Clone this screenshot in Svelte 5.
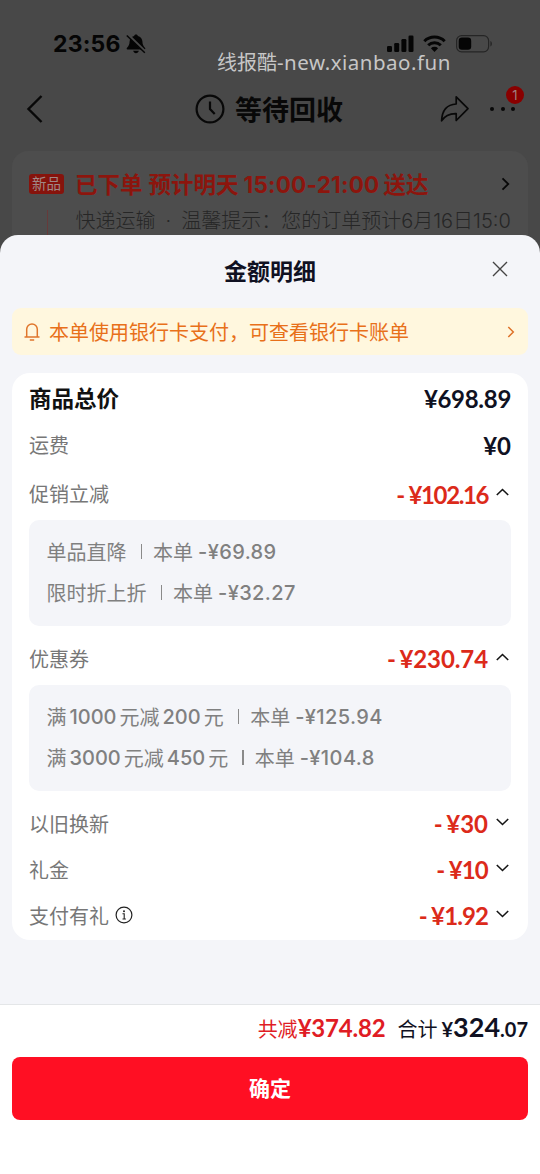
<script lang="ts">
	type Detail = { parts: string[], amount: string }
	type Row = { label: string, amount: string, spacing: number, kind?: string, arrow?: string, info?: boolean, details?: Detail[] }

	const rows: Row[] = [
		{ label: "商品总价", amount: "¥698.89", spacing: -0.3, kind: "total" },
		{ label: "运费", amount: "¥0", spacing: 0, kind: "freight" },
		{
			label: "促销立减", amount: "¥102.16", spacing: -1.4, kind: "promo", arrow: "up",
			details: [
				{ parts: ["单品直降"], amount: "-¥69.89" },
				{ parts: ["限时折上折"], amount: "-¥32.27" },
			],
		},
		{
			label: "优惠券", amount: "¥230.74", spacing: -0.1, kind: "coupon", arrow: "up",
			details: [
				{ parts: ["满", "1000", "元减", "200", "元"], amount: "-¥125.94" },
				{ parts: ["满", "3000", "元减", "450", "元"], amount: "-¥104.8" },
			],
		},
		{ label: "以旧换新", amount: "¥30", spacing: 0, kind: "trade", arrow: "down" },
		{ label: "礼金", amount: "¥10", spacing: -0.8, arrow: "down" },
		{ label: "支付有礼", amount: "¥1.92", spacing: -0.9, arrow: "down", info: true },
	]

	let open = $state(rows.map((row) => row.arrow === "up"))

	function toggle(i: number): void {
		if (rows[i].details) open[i] = !open[i]
	}
</script>

<main>
	<div class="behind">
		<div class="status">
			<span class="time">23:56</span>
			<svg class="mute" width="20" height="20" viewBox="0 0 20 20">
				<path d="M10 0.500c-1 0-1.800.7-1.900 1.500C5.400 2.700 3.700 4.900 3.600 7.500c-.1 3-.8 4.500-2.700 6.400-.5.6-.2 1.500.6 1.500h17c.8 0 1.100-.9.6-1.500-1.900-1.900-2.600-3.400-2.700-6.400C16.300 4.900 14.600 2.700 11.900 2 11.800 1.200 11 .5 10 .5zM7.200 16.700h5.600c-.3 1.600-1.400 2.500-2.800 2.500s-2.500-.9-2.800-2.500z" />
				<path d="M2.200 1l17.600 17.200" stroke="#484848" stroke-width="2.600" />
				<path d="M.8 1.500l18 17.300" stroke="#050505" stroke-width="1.500" />
			</svg>
			<span class="grow"></span>
			<svg width="27" height="18" viewBox="0 0 27 18">
				<rect x="0" y="11" width="5" height="6" rx="1.300" />
				<rect x="7.200" y="8" width="5" height="9" rx="1.300" />
				<rect x="14.400" y="4" width="5" height="13" rx="1.300" />
				<rect x="21.500" y="0.500" width="5" height="16.500" rx="1.300" />
			</svg>
			<svg class="wifi" width="23" height="18" viewBox="0 0 23 18">
				<g fill="none" stroke="#050505" stroke-width="3">
					<path d="M1.300 6.200a14.600 14.600 0 0 1 20.400 0" />
					<path d="M5.200 10.300a9 9 0 0 1 12.600 0" />
				</g>
				<path d="M7.900 13.200a5.200 5.200 0 0 1 7.200 0L11.500 17z" />
			</svg>
			<svg class="battery" width="37" height="18" viewBox="0 0 37 18">
				<rect x="0.600" y="0.600" width="32" height="16.200" rx="5" fill="none" stroke="#252525" stroke-width="1.200" />
				<rect x="2.700" y="2.600" width="12.500" height="12.200" rx="3.200" />
				<path d="M34.400 6v5.500c2-.8 2-4.700 0-5.500z" fill="#252525" />
			</svg>
		</div>

		<div class="nav">
			<svg width="18" height="30" viewBox="0 0 18 30"><path d="M15.500 2L2.500 15l13 13" fill="none" stroke="#080808" stroke-width="2.400" /></svg>
			<div class="heading">
				<svg width="30" height="30" viewBox="0 0 30 30" fill="none" stroke="#080808" stroke-width="2.200">
					<circle cx="15" cy="15" r="13.400" />
					<path d="M15 7.500V15l4.700 5" />
				</svg>
				<span>等待回收</span>
			</div>
			<svg class="share" width="30" height="28" viewBox="0 0 30 28"><path d="M16.200 1.800L28 13.700 16.200 25.500V18.700C9 18.500 5 20.500 1.600 25.900 2 15 7.500 9.500 16.200 9z" fill="none" stroke="#080808" stroke-width="1.700" stroke-linejoin="round" /></svg>
			<div class="more">
				<i></i><i></i><i></i>
				<span class="badge">1</span>
			</div>
		</div>

		<div class="order">
			<div class="order-line">
				<span class="tag">新品</span>
				<b class="state">已下单</b><b class="state due">预计明天</b><b class="digits">15:00-21:00</b><b class="state">送达</b>
				<span class="grow"></span>
				<svg width="9" height="14" viewBox="0 0 9 14"><path d="M1.500 1.300L7.300 7l-5.800 5.700" fill="none" stroke="#080808" stroke-width="1.800" /></svg>
			</div>
			<div class="hint"><span class="rail"></span><span>快递运输&ensp;·&ensp;温馨提示：</span><span class="tip">您的订单预计6月16日15:0</span></div>
		</div>
	</div>
	<div class="watermark">线报酷<span>-new.xianbao.fun</span></div>

	<section class="sheet">
		<header>
			<h1>金额明细</h1>
			<svg class="close" width="16" height="16" viewBox="0 0 16 16"><path d="M1 1l14 14M15 1L1 15" stroke="#444" stroke-width="1.400" /></svg>
		</header>

		<div class="notice">
			<svg width="16" height="19" viewBox="0 0 16 19" fill="none" stroke="#e0762c" stroke-width="1.500">
				<path d="M2.700 15V7.200a5.300 5.300 0 0 1 10.600 0V15M.5 15h15M5.800 18h4.400" />
			</svg>
			<span>本单使用银行卡支付，可查看银行卡账单</span>
			<svg class="go" width="8" height="12" viewBox="0 0 8 12"><path d="M1.300 1l5 5-5 5" fill="none" stroke="#de7128" stroke-width="1.500" /></svg>
		</div>

		<div class="card">
			{#each rows as row, i}
				<!-- svelte-ignore a11y_click_events_have_key_events, a11y_no_static_element_interactions -->
				<div class="row {row.kind ?? ''}" onclick={() => toggle(i)}>
					<span class="label">{row.label}</span>
					{#if row.info}
						<svg class="info" width="18" height="18" viewBox="0 0 18 18">
							<circle cx="9" cy="9" r="7.900" fill="none" stroke="#222" stroke-width="1.200" />
							<circle cx="9" cy="5.300" r="1" fill="#222" />
							<path d="M7.500 7.800h1.700v5M7.500 13h3.400" fill="none" stroke="#222" stroke-width="1.100" />
						</svg>
					{/if}
					<span class="grow"></span>
					{#if row.arrow}<span class="minus">-</span>{/if}
					<span class="price" class:off={row.arrow} style:letter-spacing="{row.spacing}px">{row.amount}</span>
					{#if row.arrow}
						<svg class="arrow" class:flip={row.details ? open[i] : false} width="13" height="8" viewBox="0 0 13 8"><path d="M.8 1L6.500 6.500 12.200 1" fill="none" stroke="#151515" stroke-width="1.600" /></svg>
					{/if}
				</div>
				{#if row.details && open[i]}
					<div class="details">
						{#each row.details as detail}
							<div class="detail">
								{#each detail.parts as part, n}<span class:num={n % 2 === 1}>{part}</span>{/each}
								<span class="bar"></span>
								<span>本单</span>
								<span class="value">{detail.amount}</span>
							</div>
						{/each}
					</div>
				{/if}
			{/each}
		</div>

		<footer>
			<div class="sum">
				<span class="saved">共减</span><span class="saved-price">¥374.82</span>
				<span class="pay">合计</span><span class="yen">¥</span><span class="whole">324</span><span class="cents">.07</span>
			</div>
			<button>确定</button>
		</footer>
	</section>
</main>

<style>
	:global(body) {
		background: #484848;
	}

	main {
		position: relative;
		width: 540px;
		height: 1174px;
		overflow: hidden;
		font-family: Inter, "Noto Sans CJK SC", sans-serif;
		font-size: 20px;
		white-space: nowrap;
		background: #484848;
	}

	svg {
		display: block;
		flex: none;
	}

	.grow {
		flex: 1;
	}

	.status {
		display: flex;
		align-items: center;
		height: 30px;
		padding: 29px 47px 0 53px;
		color: #050505;
		fill: #050505;
	}

	.time {
		font-size: 23px;
		font-weight: 700;
		width: 72px;
		letter-spacing: 0.2px;
	}

	.mute {
		margin-left: 1px;
	}

	.wifi {
		margin-left: 9px;
	}

	.battery {
		margin-left: 10px;
	}

	.nav {
		display: flex;
		align-items: center;
		height: 60px;
		margin-top: 20px;
		padding: 0 24px 0 26px;
		color: #080808;
	}

	.heading {
		display: flex;
		align-items: center;
		gap: 10px;
		margin-left: 151px;
		font-size: 27px;
		font-weight: 700;
	}

	.heading span {
		padding-bottom: 2px;
	}

	.share {
		margin-left: 97px;
	}

	.more {
		position: relative;
		display: flex;
		gap: 6.500px;
		margin-left: 20px;
	}

	.more i {
		width: 4px;
		height: 4px;
		border-radius: 50%;
		background: #080808;
	}

	.badge {
		position: absolute;
		left: 16px;
		top: -21px;
		width: 18px;
		height: 18px;
		border-radius: 50%;
		background: #890000;
		color: #a08080;
		font-size: 13px;
		line-height: 18px;
		text-align: center;
	}

	.order {
		height: 120px;
		margin: 12px 12px 0;
		border-radius: 16px;
		background: #4d4d4d;
	}

	.order-line {
		display: flex;
		align-items: center;
		height: 32px;
		padding: 17px 18px 0 17px;
		color: #8c150d;
		font-size: 22.500px;
	}

	.tag {
		width: 35px;
		height: 20px;
		margin-right: 11px;
		border-radius: 3px;
		background: #86130c;
		color: #a08886;
		font-size: 14.500px;
		line-height: 20px;
		text-align: center;
	}

	.state {
		padding-bottom: 2px;
		font-weight: 600;
	}

	.due {
		margin-left: 6px;
	}

	.digits {
		margin: 0 4px 0 5px;
		font-weight: 700;
		font-size: 22.500px;
		letter-spacing: 0.2px;
	}

	.hint {
		display: flex;
		align-items: center;
		height: 38px;
		padding-left: 35px;
		color: #262626;
		font-weight: 300;
	}

	.rail {
		width: 1px;
		height: 30px;
		margin: 12px 27.500px 0 0;
		background: #663a3a;
	}

	.watermark {
		position: absolute;
		left: 217px;
		top: 47px;
		color: #c6c6c6;
		font-family: "Noto Sans", "Noto Sans CJK SC", sans-serif;
		font-size: 20px;
		line-height: 30px;
	}

	.watermark span {
		font-size: 20.500px;
		letter-spacing: 0.500px;
	}

	.sheet {
		position: absolute;
		inset: 235px 0 0;
		display: flex;
		flex-direction: column;
		border-radius: 18px 18px 0 0;
		background: #f4f5f9;
	}

	header {
		display: flex;
		align-items: center;
		justify-content: flex-end;
		height: 73px;
		padding-right: 32px;
	}

	h1 {
		margin: -3px 176px 0 0;
		color: #101122;
		font-size: 23px;
		font-weight: 700;
	}

	.close {
		margin-top: -6px;
	}

	.notice {
		display: flex;
		align-items: center;
		height: 47px;
		margin: 0 12px;
		padding: 0 13px 0 12px;
		border-radius: 9px;
		background: #fff7de;
		color: #e8701a;
	}

	.notice span {
		flex: 1;
		margin-left: 9px;
	}

	.card {
		height: 567px;
		margin: 18px 12px 0;
		border-radius: 18px;
		background: #fff;
	}

	.row {
		display: flex;
		align-items: center;
		height: 46px;
		padding: 0 17px;
	}

	.label {
		color: #777;
	}

	.total {
		padding-top: 1px;
		padding-bottom: 1px;
	}

	.total .label {
		color: #111;
		font-size: 22.500px;
		font-weight: 700;
	}

	.freight {
		padding-bottom: 1px;
	}

	.promo {
		padding-top: 2px;
		padding-bottom: 4px;
	}

	.coupon {
		padding-top: 9px;
		padding-bottom: 4px;
	}

	.trade {
		padding-top: 9px;
	}

	.info {
		margin-left: 6px;
	}

	.price,
	.minus,
	.saved-price,
	.yen,
	.whole,
	.cents {
		color: #101122;
		font-family: Lato, sans-serif;
		font-size: 24px;
		font-weight: 700;
	}

	.minus,
	.off {
		color: #dc2a1a;
	}

	.minus {
		margin-right: 3.500px;
	}

	.total .price,
	.freight .price,
	.promo .price,
	.promo .minus {
		padding-top: 2px;
	}

	.arrow {
		margin: -3px 2px 0 8px;
	}

	.flip {
		transform: scaleY(-1);
	}

	.details {
		height: 82px;
		margin: 0 17px;
		padding: 11px 17.500px 13px;
		border-radius: 10px;
		background: #f4f5f9;
		color: #808080;
	}

	.detail {
		display: flex;
		align-items: center;
		height: 41px;
	}

	.num {
		margin: 0 3px;
		font-weight: 500;
	}

	.bar {
		width: 1.500px;
		height: 15px;
		margin: 0 11px 0 14px;
		background: #8a8a8a;
	}

	.value {
		margin-left: 5px;
		font-weight: 500;
		letter-spacing: 0.400px;
	}

	footer {
		flex: 1;
		margin-top: 64px;
		border-top: 1px solid #e4e6e8;
		background: #fff;
	}

	.sum {
		display: flex;
		align-items: baseline;
		justify-content: flex-end;
		height: 52px;
		padding-right: 12px;
		line-height: 44px;
	}

	.saved,
	.saved-price {
		color: #e01c24;
	}

	.saved-price {
		letter-spacing: -0.2px;
	}

	.pay {
		margin: 0 4px 0 12px;
		color: #101122;
	}

	.yen {
		font-size: 20px;
	}

	.whole {
		font-size: 27px;
	}

	.cents {
		font-size: 20px;
	}

	button {
		display: block;
		width: 516px;
		height: 63px;
		margin: 0 auto;
		padding: 0 0 3px;
		border: 0;
		border-radius: 8px;
		background: #ff0f23;
		color: #fff;
		font: 700 21px "Noto Sans CJK SC", sans-serif;
	}
</style>
